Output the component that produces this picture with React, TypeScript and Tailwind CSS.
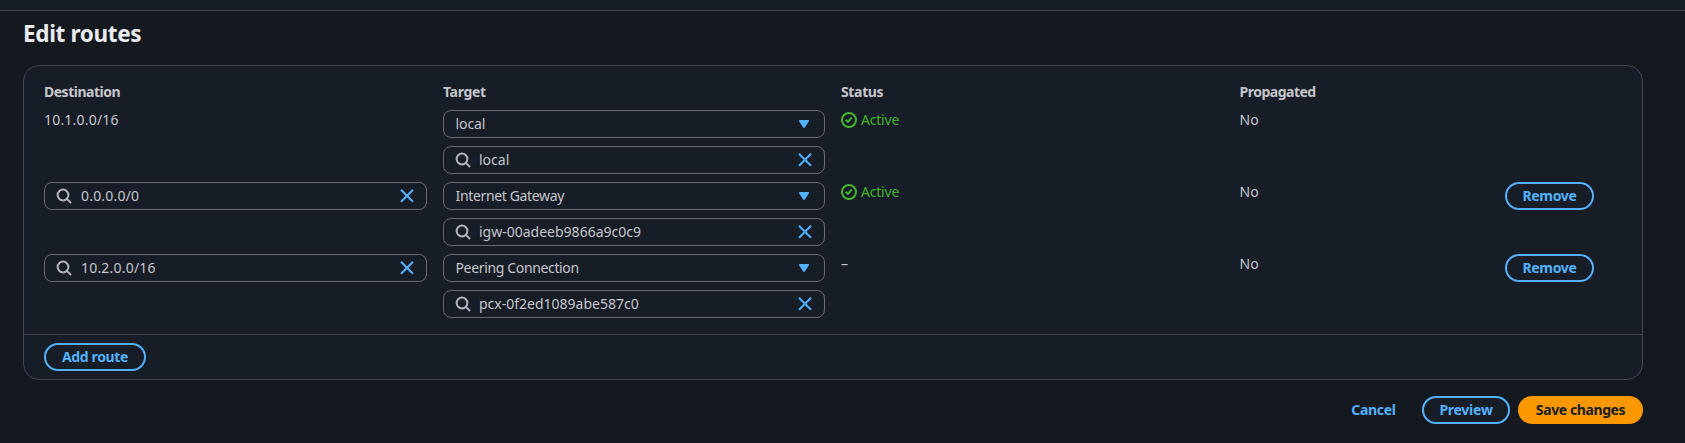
import type { ReactNode } from "react";

function SearchIcon() {
  return (
    <svg className="size-4 shrink-0" viewBox="0 0 16 16" fill="none" stroke="#b4b4bb" strokeWidth="2">
      <circle cx="7" cy="7" r="5.4" />
      <path d="m10.9 10.9 4.1 4.1" />
    </svg>
  );
}

function ClearIcon() {
  return (
    <svg className="size-4 shrink-0" viewBox="0 0 16 16" fill="none" stroke="#53b1fd" strokeWidth="2">
      <path d="m2 1.8 12 12M14 1.8l-12 12" />
    </svg>
  );
}

function CaretIcon() {
  return (
    <svg className="size-4 shrink-0" viewBox="0 0 16 16" fill="#53b1fd" stroke="#53b1fd" strokeWidth="2" strokeLinejoin="round">
      <path d="M4 5h8l-4 6z" />
    </svg>
  );
}

function CheckIcon() {
  return (
    <svg className="size-4 shrink-0" viewBox="0 0 16 16" fill="none" stroke="#43b52c" strokeWidth="2">
      <circle cx="8" cy="8" r="7" />
      <path d="m4.6 7.7 2.3 2.2 3.9-4.4" />
    </svg>
  );
}

function SearchInput({ value, className = "ml-2" }: { value: string; className?: string }) {
  return (
    <div className="flex h-7 items-center rounded-lg border border-[#656871] px-[11px]">
      <SearchIcon />
      <span className={`flex-1 ${className}`}>{value}</span>
      <ClearIcon />
    </div>
  );
}

function Select({ value, className }: { value: string; className: string }) {
  return (
    <div className="flex h-7 items-center rounded-lg border border-[#656871] pl-[11.5px] pr-3">
      <span className={`flex-1 ${className}`}>{value}</span>
      <CaretIcon />
    </div>
  );
}

function Button({ children, className }: { children: ReactNode; className: string }) {
  return (
    <button className={`flex h-7 items-center justify-center whitespace-nowrap rounded-full font-bold ${className}`}>
      {children}
    </button>
  );
}

const outline = "border-2 border-[#53b1fd] bg-[#161d26] text-[#53b1fd]";

type Route = {
  destination: string;
  fixed?: boolean;
  kind: string;
  target: string;
  active: boolean;
};

const routes: Route[] = [
  { destination: "10.1.0.0/16", fixed: true, kind: "local", target: "local", active: true },
  { destination: "0.0.0.0/0", kind: "Internet Gateway", target: "igw-00adeeb9866a9c0c9", active: true },
  { destination: "10.2.0.0/16", kind: "Peering Connection", target: "pcx-0f2ed1089abe587c0", active: false },
];

const columns = "grid grid-cols-[383px_382px_382.5px_249.5px_90px] gap-x-4";

export default function App() {
  return (
    <div className="h-[443px] overflow-hidden bg-[#14181f] font-['Noto_Sans',sans-serif] text-[14px] leading-5 text-[#c6c6cd]">
      <div className="h-[11px] border-b border-[#424650] bg-[#161d26]" />
      <main className="pl-[23px] pr-[42px]">
        <h1 className="pt-[7px] text-[22.5px] font-bold leading-8 tracking-[-0.34px] text-[#ebebf0]">Edit routes</h1>
        <section className="mt-[15px] h-[315px] rounded-2xl border border-[#424650] bg-[#161d26]">
          <div className="h-[269px] border-b border-[#424650] pl-5 pt-4">
            <div className={`${columns} mb-2 font-bold`}>
              <span className="tracking-[-0.5px]">Destination</span>
              <span className="tracking-[-0.35px]">Target</span>
              <span className="tracking-[-0.35px]">Status</span>
              <span className="tracking-[-0.5px]">Propagated</span>
            </div>
            <div className="flex flex-col gap-2">
              {routes.map((r) => (
                <div key={r.destination} className={columns}>
                  <div>
                    {r.fixed ? (
                      <span className="tracking-[0.2px]">{r.destination}</span>
                    ) : (
                      <SearchInput value={r.destination} className="ml-[9px] tracking-[0.2px]" />
                    )}
                  </div>
                  <div className="flex flex-col gap-2">
                    <Select value={r.kind} className={r.fixed ? "tracking-[-0.1px]" : "tracking-[-0.35px]"} />
                    <SearchInput value={r.target} />
                  </div>
                  {r.active ? (
                    <div className="flex h-5 items-center gap-1 text-[#43b52c]">
                      <CheckIcon />
                      <span className="tracking-[-0.2px]">Active</span>
                    </div>
                  ) : (
                    <span>–</span>
                  )}
                  <span>No</span>
                  {!r.fixed && <Button className={`w-[89px] tracking-[-0.35px] ${outline}`}>Remove</Button>}
                </div>
              ))}
            </div>
          </div>
          <div className="pl-5 pt-2">
            <Button className={`w-[102px] tracking-[-0.35px] ${outline}`}>Add route</Button>
          </div>
        </section>
        <div className="mt-4 flex justify-end gap-2">
          <Button className="w-[81px] tracking-[-0.3px] text-[#53b1fd]">Cancel</Button>
          <Button className={`w-[88px] tracking-[-0.25px] ${outline}`}>Preview</Button>
          <Button className="w-[125px] bg-[#fb9800] tracking-[-0.4px] text-[#161d26]">Save changes</Button>
        </div>
      </main>
    </div>
  );
}
